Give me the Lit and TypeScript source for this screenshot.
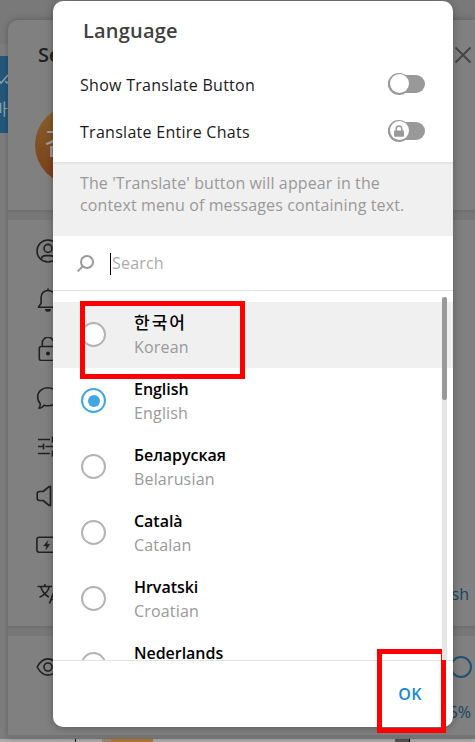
import { LitElement, html, css, svg, nothing } from "lit";
import { customElement, property } from "lit/decorators.js";

const icons = {
  account: svg`<circle cx="12" cy="12" r="11"/><circle cx="12" cy="9.4" r="4"/><path d="M5 20.300C5.600 17.500 7.500 16.600 10 16.600h4c2.500 0 4.400.9 5 3.700"/>`,
  bell: svg`<path d="M2.500 19.300h19l-2.600-4V9.500c0-4.400-2.900-7-6.900-7s-6.900 2.600-6.900 7v5.800z"/><path d="M12 .5v2"/><path d="M9.800 21.800h4.400c-.8 1.600-3.600 1.600-4.400 0z" fill="#202020"/>`,
  lock: svg`<rect x="3.300" y="9.500" width="17.400" height="14" rx="2"/><path d="M6.300 9.500V6a5.700 5.700 0 0 1 11.400 0v3.500"/><circle cx="12" cy="16.500" r="1.200" fill="#202020"/>`,
  chat: svg`<path d="M12 1.800c6 0 10.300 3.700 10.300 9s-4.300 9-10.300 9c-1.300 0-2.700-.2-3.900-.6C7 21 5 22.300 3 22.300c1-1.400 1.400-3 1.200-4.600C2.400 16 1.700 13.400 1.700 10.800c0-5.300 4.300-9 10.300-9z"/>`,
  sliders: svg`<path d="M2 4.500h12M17 4.500h5M16.500 1.500v6M2 11.500h5M9.500 11.500H22M7.500 8.500v6M2 18.500h12M17 18.500h5M16.500 15.500v6"/>`,
  speaker: svg`<path d="M3.500 7.500H7l6.300-5c.6-.5 1.200-.2 1.200.6v17.800c0 .8-.6 1.100-1.200.6L7 16.500H3.500C2 16.500 1.200 15.500 1.200 14v-4c0-1.500.8-2.500 2.300-2.500zM18.500 7c2.500 3 2.500 7 0 10"/>`,
  battery: svg`<rect x=".9" y="4.300" width="20" height="15" rx="2.200"/><path d="M23 9.500v5"/><path d="M12 7.500l-4.500 5.500h3l-.8 4L14 11.200h-3z" fill="#202020" stroke-width=".3"/>`,
  translate: svg`<path d="M1.500 4.500h14.500M8.800 2v2.500M3.500 15.200C8.500 13 12.200 9.500 13.200 4.700M4.800 4.700c1.200 4.500 4 8 8 10.300M13.500 21.500l5-13 5 13M15.300 17.500h6.400"/>`,
  eye: svg`<path d="M1.200 12C4 6.500 7.700 3.900 12 3.900S20 6.500 22.800 12C20 17.500 16.300 20.100 12 20.100S4 17.500 1.200 12z"/><circle cx="12" cy="12" r="4"/>`,
};

@customElement("settings-panel")
class SettingsPanel extends LitElement {
  static styles = css`
    :host { display: flex; flex-direction: column; height: 718px; background: #808080; border-radius: 10px 0 0 0; overflow: hidden; box-shadow: 0 0 7px rgba(0,0,0,.25); }
    .head { height: 190px; display: flex; justify-content: space-between; }
    .title { margin: 21px 0 0 30px; font-size: 20px; line-height: 28px; font-weight: 600; color: #202020; }
    .avatar { width: 80px; height: 80px; border-radius: 50%; margin: 36px 0 0 27px; background: linear-gradient(#88612c, #7a3d19); color: #a5a09c; font-size: 30px; font-weight: 400; line-height: 76px; text-indent: 9px; }
    .close { width: 18px; height: 18px; margin: 26px 3px 0 0; fill: none; stroke: #434343; stroke-width: 1.8; }
    .band { height: 10px; flex: none; background: linear-gradient(#6e6e6e, #787878 4px); }
    .items { height: 406px; box-sizing: border-box; padding: 6px 0 0 28px; }
    .item { height: 49px; display: flex; align-items: center; }
    .icon { width: 24px; height: 24px; fill: none; stroke: #202020; stroke-width: 1.6; stroke-linejoin: round; stroke-linecap: butt; }
    .value { color: #15445f; font-size: 16px; margin: 0 6px 0 auto; }
    .scale { height: 99px; display: flex; justify-content: space-between; padding-left: 28px; }
    .scale .icon { margin-top: 19px; }
    .right { display: flex; flex-direction: column; align-items: flex-end; color: #15445f; padding-right: 3px; }
    .ring { box-sizing: border-box; width: 22px; height: 22px; margin-top: 20px; border: 2px solid #1d5271; border-radius: 50%; }
    .percent { font-size: 16px; line-height: 22px; margin: 23px 1px 0 0; }
    .foot { flex: 1; background: #747474; }
  `;
  render() {
    const rows = [icons.account, icons.bell, icons.lock, icons.chat, icons.sliders, icons.speaker, icons.battery, icons.translate];
    return html`
      <div class="head">
        <div><div class="title">Settings</div><div class="avatar">김</div></div>
        <svg class="close" viewBox="0 0 18 18"><path d="M1.500 1.500l15 15M16.500 1.500l-15 15"/></svg>
      </div>
      <div class="band"></div>
      <div class="items">${rows.map((r, i) => html`<div class="item">
        <svg class="icon" viewBox="0 0 24 24">${r}</svg>${i === 7 ? html`<span class="value">English</span>` : nothing}
      </div>`)}</div>
      <div class="band"></div>
      <div class="scale"><svg class="icon" viewBox="0 0 24 24">${icons.eye}</svg>
        <div class="right"><div class="ring"></div><div class="percent">125%</div></div></div>
      <div class="foot"></div>`;
  }
}

@customElement("toggle-switch")
class ToggleSwitch extends LitElement {
  @property({ type: Boolean }) locked = false;
  static styles = css`
    :host { display: flex; width: 37px; height: 22px; align-items: center; }
    .track { width: 37px; height: 18px; border-radius: 9px; background: #999; display: flex; align-items: center; }
    .knob { box-sizing: border-box; flex: none; width: 22px; height: 22px; border-radius: 50%; background: #999; display: flex; align-items: center; justify-content: center; }
    .face { width: 19px; height: 19px; border-radius: 50%; background: #fff; display: flex; align-items: center; justify-content: center; }
    .lock { width: 10px; height: 12px; fill: #999; }
    .shackle { fill: none; stroke: #999; stroke-width: 1.5; }
  `;
  render() {
    return html`<div class="track"><div class="knob"><div class="face">${this.locked ? html`<svg class="lock" viewBox="0 0 10 12">
      <rect x="0" y="5.500" width="10" height="6.200" rx="1"/><path class="shackle" d="M2.200 6V3.700a2.800 2.800 0 0 1 5.600 0V6"/></svg>` : nothing}</div></div></div>`;
  }
}

@customElement("language-row")
class LanguageRow extends LitElement {
  @property() name = "";
  @property() label = "";
  @property({ type: Boolean, reflect: true }) checked = false;
  @property({ type: Boolean, reflect: true }) active = false;
  static styles = css`
    :host { display: flex; box-sizing: border-box; flex: none; height: 66px; padding-left: 28px; }
    :host([active]) { background: #f0f0f0; }
    .radio { box-sizing: border-box; width: 25px; height: 25px; margin: 20px 28px 0 0; border-radius: 50%; border: 2px solid #b3b3b3; background: #fff; display: flex; align-items: center; justify-content: center; }
    :host([checked]) .radio { border-color: #40a7e3; }
    .dot { width: 12px; height: 12px; border-radius: 50%; background: #40a7e3; }
    .text { padding-top: 9px; font-size: 16px; line-height: 24px; }
    .name { height: 24px; font-weight: 600; color: #000; letter-spacing: -.03px; }
    .name:lang(ko) { font-size: 17px; font-weight: 500; letter-spacing: 2px; }
    .label { color: #999; letter-spacing: .17px; }
  `;
  render() {
    return html`<div class="radio">${this.checked ? html`<div class="dot"></div>` : nothing}</div>
      <div class="text"><div class="name" lang=${this.label === "Korean" ? "ko" : "en"}>${this.name}</div><div class="label">${this.label}</div></div>`;
  }
}

@customElement("language-dialog")
class LanguageDialog extends LitElement {
  static styles = css`
    :host { display: flex; flex-direction: column; width: 400px; height: 726px; background: #fff; border-radius: 10px; overflow: hidden; box-shadow: 0 1px 9px rgba(0,0,0,.3); font-size: 16px; color: #1a1a1a; }
    .title { height: 60px; box-sizing: border-box; padding: 16px 30px 0; font-size: 20px; line-height: 28px; font-weight: 600; color: #404040; letter-spacing: .2px; }
    .option { height: 47px; display: flex; align-items: center; justify-content: space-between; padding: 0 28px 0 27px; letter-spacing: .28px; }
    .option toggle-switch { margin-bottom: 2px; }
    .note { margin-top: 7px; height: 74px; box-sizing: border-box; padding: 10px 27px 0; line-height: 22px; background: linear-gradient(#dfdfdf, #f0f0f0 3px); color: #999; white-space: nowrap; letter-spacing: .12px; }
    .search { height: 55px; box-sizing: border-box; border-bottom: 1px solid #e2e2e2; display: flex; align-items: center; padding: 0 24px; color: #aaa; letter-spacing: .2px; }
    .glass { width: 18px; height: 18px; margin-top: 2px; fill: none; stroke: #999; stroke-width: 2; }
    .caret { width: 1px; height: 22px; margin: 2px 1px 0 15px; background: #000; }
    .body { display: flex; height: 369px; }
    .list { flex: 1; display: flex; flex-direction: column; box-sizing: border-box; padding-top: 11px; overflow: hidden; }
    .bar { width: 5px; margin: 6px 6px 0 -11px; background: #e5e5e5; z-index: 1; }
    .thumb { height: 103px; border-radius: 3px; background: #999; }
    .footer { flex: 1; border-top: 1px solid #e2e2e2; display: flex; align-items: center; justify-content: flex-end; padding-right: 31px; color: #168acd; font-weight: 600; letter-spacing: .5px; }
  `;
  render() {
    const languages = [["한국어", "Korean"], ["English", "English"], ["Беларуская", "Belarusian"], ["Català", "Catalan"], ["Hrvatski", "Croatian"], ["Nederlands", "Dutch"]];
    return html`
      <div class="title">Language</div>
      <div class="option">Show Translate Button<toggle-switch></toggle-switch></div>
      <div class="option">Translate Entire Chats<toggle-switch locked></toggle-switch></div>
      <div class="note">The 'Translate' button will appear in the<br>context menu of messages containing text.</div>
      <div class="search"><svg class="glass" viewBox="0 0 18 18"><circle cx="10" cy="7" r="6"/><path d="M5.800 11.300L.7 16.400"/></svg><div class="caret"></div>Search</div>
      <div class="body"><div class="list">${languages.map(([name, label], i) => html`
        <language-row .name=${name} .label=${label} ?active=${i === 0} ?checked=${i === 1}></language-row>`)}</div>
        <div class="bar"><div class="thumb"></div></div></div>
      <div class="footer">OK</div>`;
  }
}

@customElement("app-root")
class AppRoot extends LitElement {
  static styles = css`
    :host { display: block; position: relative; width: 475px; height: 742px; overflow: hidden; background: #7e7e7e; font-family: "Open Sans", "Noto Sans CJK KR", sans-serif; }
    .backdrop { display: flex; flex-direction: column; height: 742px; }
    .topbar { height: 44px; background: #797979; }
    .bubble { width: 30px; height: 77px; margin-top: 12px; background: #24587a; color: #90a4b0; font-size: 16px; }
    .tick { display: block; width: 9px; height: 20px; padding-top: 15px; fill: none; stroke: #8da2af; stroke-width: 1.500; }
    .char { line-height: 20px; margin: 8px 0 0 -7px; }
    .strip { height: 3px; margin-top: auto; background: #adadad; display: flex; }
    .dark { width: 1px; margin-left: 75px; background: #111; }
    .pale { width: 9px; margin-left: 26px; background: #a38c70; }
    .orange { width: 42px; background: #b67a34; }
    .grey { width: 14px; margin-left: 242px; background: #555; border-right: 1px solid #000; }
    .panel { position: absolute; left: 8px; right: 0; top: 20px; }
    .dialog { position: absolute; left: 53px; top: 1px; }
    .mark { position: absolute; box-sizing: border-box; border: 5px solid #f00; }
    .language { left: 80px; top: 301px; width: 165px; height: 78px; }
    .confirm { left: 377px; top: 649px; width: 69px; height: 84px; }
  `;
  render() {
    return html`
      <div class="backdrop"><div class="topbar"></div>
        <div class="bubble"><svg class="tick" viewBox="0 0 9 20"><path d="M-3 7l4 5 7-8M5 10l2 2 4-4"/></svg><div class="char">바</div></div>
        <div class="strip"><div class="dark"></div><div class="pale"></div><div class="orange"></div><div class="grey"></div></div>
      </div>
      <settings-panel class="panel"></settings-panel>
      <language-dialog class="dialog"></language-dialog>
      <div class="mark language"></div><div class="mark confirm"></div>`;
  }
}
